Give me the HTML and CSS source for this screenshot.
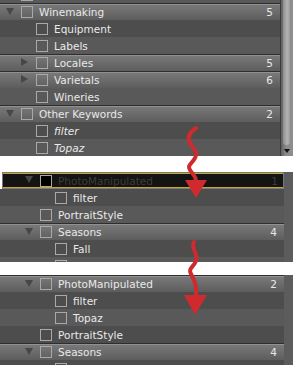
FILE: index.html
```html
<!DOCTYPE html>
<html lang="en">
<head>
    <meta charset="UTF-8">
    <meta name="viewport" content="width=device-width, initial-scale=1.0">
    <title>Keyword List</title>
    <link rel="stylesheet" href="styles.css">
</head>
<body>

    <div class="page">

        <!-- lista com barra de rolagem -->
        <div class="panel panel-top">
            <ul class="list list-scrolled">
                <li class="row row-light"><span class="twisty"></span><span class="check"></span><span class="name"></span></li>
                <li class="row row-head"><span class="twisty open"></span><span class="check"></span><span class="name">Winemaking</span><span class="count">5</span></li>
                <li class="row row-dark lvl1"><span class="twisty"></span><span class="check"></span><span class="name">Equipment</span></li>
                <li class="row row-light lvl1"><span class="twisty"></span><span class="check"></span><span class="name">Labels</span></li>
                <li class="row row-head lvl1"><span class="twisty closed"></span><span class="check"></span><span class="name">Locales</span><span class="count">5</span></li>
                <li class="row row-head lvl1"><span class="twisty closed"></span><span class="check"></span><span class="name">Varietals</span><span class="count">6</span></li>
                <li class="row row-light lvl1"><span class="twisty"></span><span class="check"></span><span class="name">Wineries</span></li>
                <li class="row row-head"><span class="twisty open"></span><span class="check"></span><span class="name">Other Keywords</span><span class="count">2</span></li>
                <li class="row row-dark lvl1"><span class="twisty"></span><span class="check"></span><span class="name italic">filter</span></li>
                <li class="row row-light lvl1"><span class="twisty"></span><span class="check"></span><span class="name italic">Topaz</span></li>
            </ul>
            <div class="scrollbar">
                <div class="thumb"></div>
                <div class="scroll-down"></div>
            </div>
        </div>

        <!-- arrastando a palavra -->
        <div class="panel panel-small">
            <ul class="list">
                <li class="row row-sel"><span class="twisty open"></span><span class="check"></span><span class="name">PhotoManipulated</span><span class="count">1</span></li>
                <li class="row row-dark lvl1"><span class="twisty"></span><span class="check"></span><span class="name">filter</span></li>
                <li class="row row-light"><span class="twisty"></span><span class="check"></span><span class="name">PortraitStyle</span></li>
                <li class="row row-head"><span class="twisty open"></span><span class="check"></span><span class="name">Seasons</span><span class="count">4</span></li>
                <li class="row row-dark lvl1"><span class="twisty"></span><span class="check"></span><span class="name">Fall</span></li>
                <li class="row row-light lvl1"><span class="twisty"></span><span class="check"></span><span class="name">Spring</span></li>
            </ul>
            <div class="track"></div>
        </div>

        <!-- resultado -->
        <div class="panel panel-small panel-last">
            <ul class="list">
                <li class="row row-head"><span class="twisty open"></span><span class="check"></span><span class="name">PhotoManipulated</span><span class="count">2</span></li>
                <li class="row row-dark lvl1"><span class="twisty"></span><span class="check"></span><span class="name">filter</span></li>
                <li class="row row-light lvl1"><span class="twisty"></span><span class="check"></span><span class="name">Topaz</span></li>
                <li class="row row-dark"><span class="twisty"></span><span class="check"></span><span class="name">PortraitStyle</span></li>
                <li class="row row-head"><span class="twisty open"></span><span class="check"></span><span class="name">Seasons</span><span class="count">4</span></li>
                <li class="row row-dark lvl1"><span class="twisty"></span><span class="check"></span><span class="name">Fall</span></li>
            </ul>
            <div class="track"></div>
        </div>

        <svg class="arrows" width="293" height="365" viewBox="0 0 293 365">
            <path d="M196 128 C190 132 187 137 190 143 S199 151 195 158 S187 165 190 170 S196 176 196 181" />
            <polygon points="185,180 207,180 196,198" />
            <path d="M194 242 C190 248 199 254 196 261 S188 268 191 274 S197 284 196 296" />
            <polygon points="184,295 207,295 195,315" />
        </svg>
    </div>

</body>
</html>
```

FILE: styles.css
```css
/* Lista de palavras-chave */
body {
    margin: 0;
    background: #ffffff;
    font-family: "DejaVu Sans", sans-serif;
    font-size: 10.5px;
    color: #e9e9e9;
}

.page {
    position: relative;
    width: 293px;
    height: 365px;
}

.panel {
    display: grid;
    grid-template-columns: 1fr 9px;
    overflow: hidden;
    --base: 25px;
}

.panel-top {
    height: 156px;
    grid-template-columns: 1fr 13px;
    --base: 6px;
}

.panel-small {
    height: 90px;
    margin-top: 16px;
}

.panel-last {
    margin-top: 13px;
}

.list {
    list-style: none;
    margin: 0;
    padding: 0;
}

.list-scrolled {
    margin-top: -14px;
}

.row {
    --lvl: 0;
    display: flex;
    align-items: center;
    height: 17px;
    box-sizing: border-box;
    padding-left: calc(var(--base) + var(--lvl) * 15px);
    padding-right: 7px;
    white-space: nowrap;
}

.lvl1 {
    --lvl: 1;
}

.row-dark {
    background: #4d4d4d;
}

.row-light {
    background: #595959;
}

.row-head {
    background: linear-gradient(#7a7a7a, #5d5d5d);
    border-top: 1px solid #2e2e2e;
    box-shadow: inset 0 1px 0 #919191;
}

.row-sel {
    margin-left: 2px;
    padding-left: calc(var(--base) - 3px);
    padding-right: 5px;
    background: #141414;
    border: 1px solid #7a7a7a;
    box-shadow: inset 0 1px 0 #c9a62b, inset 0 -1px 0 #c9a62b;
    color: #3c3c3c;
}

.twisty {
    flex: none;
    width: 15px;
    height: 12px;
    display: flex;
    align-items: center;
}

.twisty.open::before {
    content: "";
    border-left: 4px solid transparent;
    border-right: 4px solid transparent;
    border-top: 7px solid #474747;
    margin-top: -2px;
}

.twisty.closed::before {
    content: "";
    border-top: 4px solid transparent;
    border-bottom: 4px solid transparent;
    border-left: 7px solid #474747;
    margin-top: -2px;
}

.check {
    flex: none;
    width: 12px;
    height: 12px;
    box-sizing: border-box;
    border: 1px solid #a9a9a9;
    margin-right: 6px;
}

.row-sel .check {
    background: #000000;
}

.italic {
    font-style: italic;
}

.count {
    margin-left: auto;
}

/* barra de rolagem */
.scrollbar {
    display: flex;
    flex-direction: column;
    background: linear-gradient(to right, #5f5f5f, #8a8a8a 40%, #8e8e8e);
    border-left: 1px solid #3a3a3a;
}

.thumb {
    flex: 1;
    margin: 0 3px 2px 2px;
    background: linear-gradient(to right, #8e8e8e, #b3b3b3 60%, #9a9a9a);
    border-radius: 0 0 4px 4px;
}

.scroll-down {
    height: 9px;
    display: flex;
    justify-content: center;
    padding-top: 2px;
    box-sizing: border-box;
}

.scroll-down::before {
    content: "";
    border-left: 3px solid transparent;
    border-right: 3px solid transparent;
    border-top: 4px solid #111111;
}

.track {
    background: #5c5c5c;
}

/* setas vermelhas */
.arrows {
    position: absolute;
    left: 0;
    top: 0;
    pointer-events: none;
}

.arrows path {
    fill: none;
    stroke: #cf2a2e;
    stroke-width: 4;
    stroke-linecap: round;
}

.arrows polygon {
    fill: #cf2a2e;
}
```
